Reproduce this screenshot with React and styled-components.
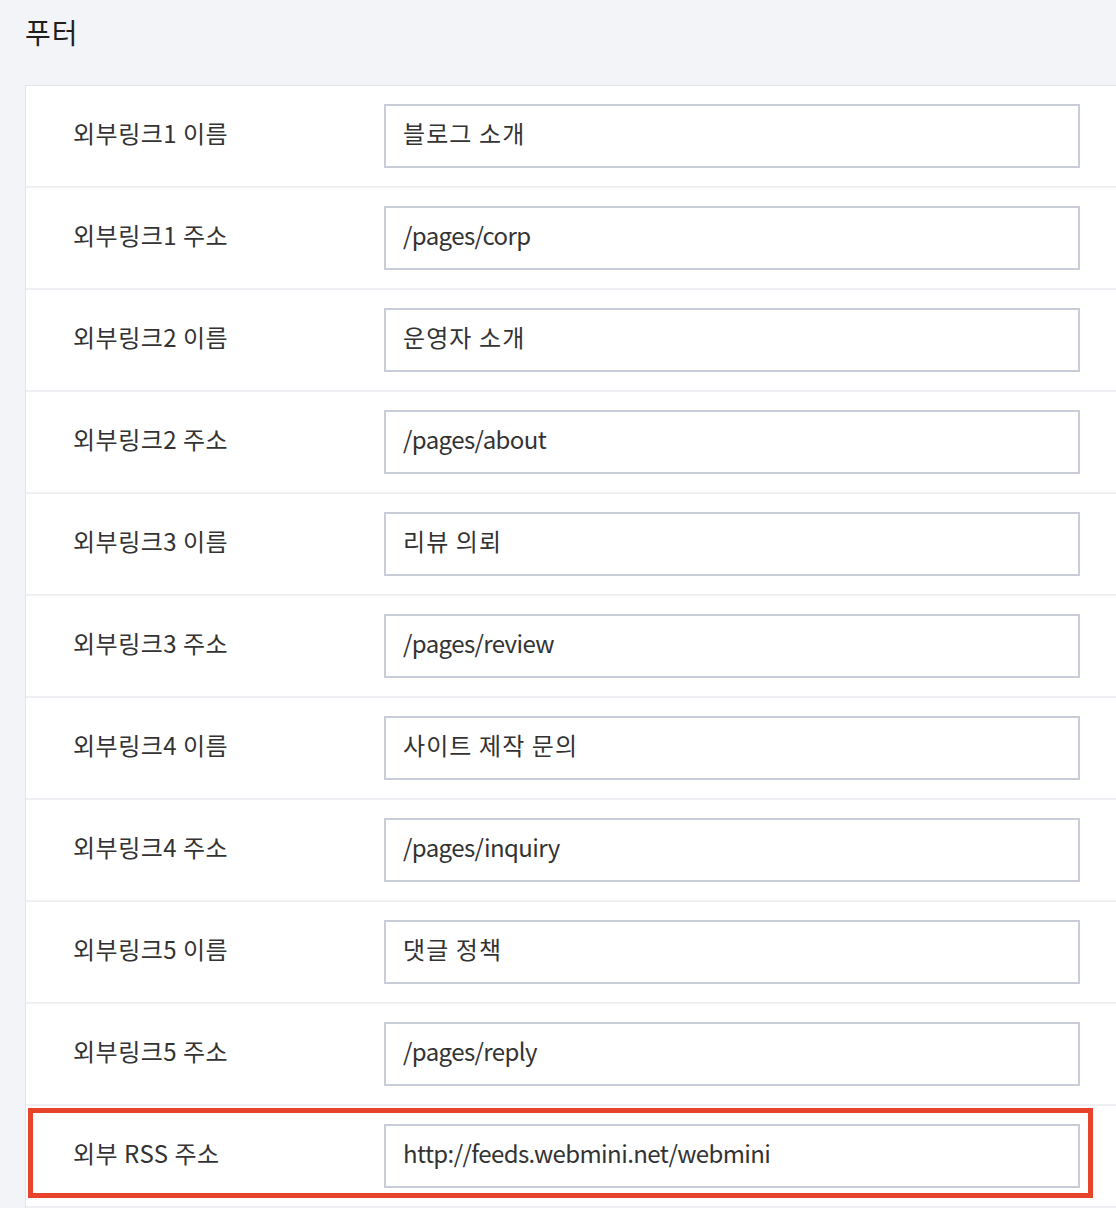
import * as React from 'react';
import styled, { createGlobalStyle } from 'styled-components';

// =====================================
// STYLED COMPONENTS
// =====================================

const GlobalStyle = createGlobalStyle`
  html, body {
    margin: 0;
    padding: 0;
    background-color: #f3f4f7;
    overflow: hidden;
  }
  body {
    font-family: "Noto Sans CJK KR", "Noto Sans", sans-serif;
    color: #333;
  }
`;

const Page = styled.div`
  width: 1116px;
  height: 1208px;
  overflow: hidden;
`;

const Title = styled.h2`
  margin: 0;
  padding: 12px 0 0 25px;
  height: 73px;
  font-size: 28px;
  font-weight: 400;
  line-height: 40px;
  letter-spacing: 1px;
  color: #1f1f1f;
`;

const Card = styled.div`
  background-color: white;
  border-top: 1px solid #e1e4eb;
  border-left: 1px solid #e1e4eb;
  margin-left: 25px;
  width: 1120px;
`;

const Row = styled.div`
  position: relative;
  display: flex;
  align-items: center;
  height: 100px;
  border-bottom: 2px solid #eff0f4;
`;

const Label = styled.div`
  width: 358px;
  flex-shrink: 0;
  box-sizing: border-box;
  padding-left: 47px;
  padding-bottom: 8px;
  font-size: 24px;
  letter-spacing: 0.5px;
  color: #333;
`;

const Field = styled.input`
  box-sizing: border-box;
  width: 696px;
  height: 64px;
  border: 2px solid #c9cdd8;
  border-radius: 0;
  padding: 0 0 8px 17px;
  font-family: "Noto Sans CJK KR", "Noto Sans", sans-serif;
  font-size: 24px;
  letter-spacing: ${(p) => (p.$hangul ? '1.1px' : '-0.6px')};
  color: #333;
  background: white;
  outline: none;
`;

const Highlight = styled.div`
  position: absolute;
  left: 2px;
  top: 2px;
  width: 1065px;
  height: 90px;
  box-sizing: border-box;
  border: 5px solid #e8432b;
  pointer-events: none;
`;

// ==========================================

const rows = [
  { label: '외부링크1 이름', value: '블로그 소개' },
  { label: '외부링크1 주소', value: '/pages/corp' },
  { label: '외부링크2 이름', value: '운영자 소개' },
  { label: '외부링크2 주소', value: '/pages/about' },
  { label: '외부링크3 이름', value: '리뷰 의뢰' },
  { label: '외부링크3 주소', value: '/pages/review' },
  { label: '외부링크4 이름', value: '사이트 제작 문의' },
  { label: '외부링크4 주소', value: '/pages/inquiry' },
  { label: '외부링크5 이름', value: '댓글 정책' },
  { label: '외부링크5 주소', value: '/pages/reply' },
  { label: '외부 RSS 주소', value: 'http://feeds.webmini.net/webmini', marked: true },
];

const isHangul = (text) => /[\uac00-\ud7a3]/.test(text);

const App = () => {
  return (
    <Page>
      <GlobalStyle />
      <Title>푸터</Title>
      <Card>
        {rows.map((row) => (
          <Row key={row.label}>
            <Label>{row.label}</Label>
            <Field type="text" value={row.value} $hangul={isHangul(row.value)} readOnly />
            {row.marked && <Highlight />}
          </Row>
        ))}
      </Card>
    </Page>
  );
};

export default App;
